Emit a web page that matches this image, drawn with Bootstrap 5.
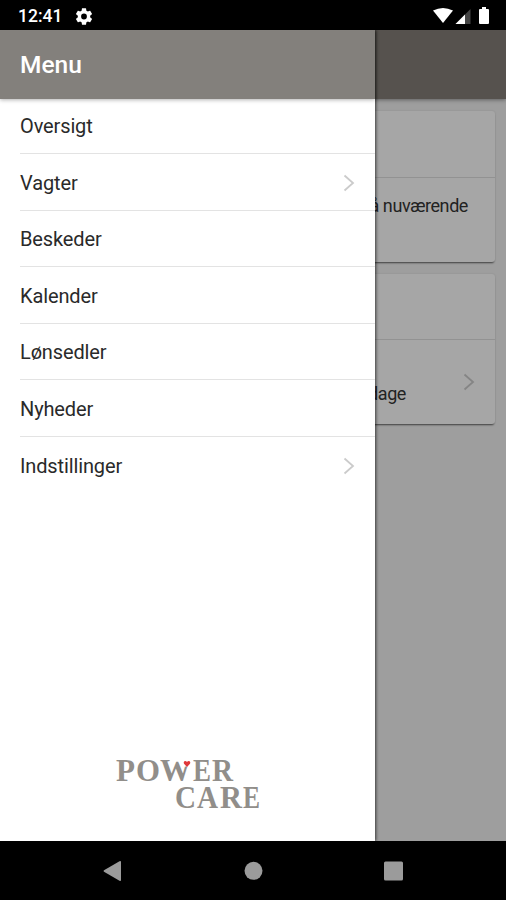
<!DOCTYPE html>
<html lang="da">
<head>
<meta charset="utf-8">
<meta name="viewport" content="width=device-width, initial-scale=1">
<title>Power Care</title>
<link href="https://cdn.jsdelivr.net/npm/bootstrap@5.3.0/dist/css/bootstrap.min.css" rel="stylesheet">
<style>
body{font-family:Roboto,"Liberation Sans",sans-serif;color:#222;width:506px;height:900px;overflow:hidden}
svg{display:block}
.status-bar{height:30px;padding:2px 16px 0 18px;font-size:17.5px;font-weight:500}
.settings-icon{margin-left:14px}
.app-bar{height:69px;background:#56524e;box-shadow:0 1px 4px rgba(0,0,0,.4)}
.page-view{background:#9e9e9e}
.info-card{background:#a6a6a6;border-radius:3px;box-shadow:0 2px 2px -1px rgba(0,0,0,.6),0 0 2px rgba(0,0,0,.12);margin:12px 11px 0;font-size:18px;letter-spacing:-.42px;line-height:27px}
.card-one{height:151px}
.card-two{height:150px}
.card-title-space{height:67px;border-bottom:1px solid #929292}
.card-two .card-title-space{height:66px}
.card-copy{padding:14px 27px}
.card-link{padding:0 20px 0 0}
.card-link p{padding-right:57px;padding-top:23px}
.drawer{width:375px;z-index:2;box-shadow:1px 0 3px rgba(0,0,0,.65)}
.drawer-head{height:69px;z-index:1;background:#83807c;padding:1px 0 0 20px;font-size:24.5px;font-weight:500;box-shadow:0 1px 4px rgba(0,0,0,.3)}
.menu-list{margin-top:-1.5px;padding-left:20px;font-size:20px;letter-spacing:-.13px}
.menu-item{height:56.6px;border-bottom:1px solid #e3e3e3;padding:1.5px 20px 0 0;color:#2a2a2a;text-decoration:none}
.menu-item:last-child{border-bottom:0}
.brand{margin-bottom:20px;margin-left:113px}
.nav-keys{height:59px}
</style>
<script src="https://cdn.jsdelivr.net/npm/bootstrap@5.3.0/dist/js/bootstrap.bundle.min.js"></script>
</head>
<body class="d-flex flex-column m-0">
<div class="status-bar bg-black text-white d-flex align-items-center flex-shrink-0">
  <span>12:41</span>
  <svg class="settings-icon" width="16" height="17" viewBox="2.3 2 19.4 20" fill="#fff"><path d="M19.43 12.98c.04-.32.07-.64.07-.98s-.03-.66-.07-.98l2.11-1.65c.19-.15.24-.42.12-.64l-2-3.46c-.12-.22-.39-.3-.61-.22l-2.49 1c-.52-.4-1.08-.73-1.69-.98l-.38-2.65A.49.49 0 0 0 14 2h-4c-.25 0-.46.18-.49.42l-.38 2.65c-.61.25-1.17.59-1.69.98l-2.49-1c-.23-.09-.49 0-.61.22l-2 3.46c-.13.22-.07.49.12.64l2.11 1.65c-.04.32-.07.65-.07.98s.03.66.07.98l-2.11 1.65c-.19.15-.24.42-.12.64l2 3.46c.12.22.39.3.61.22l2.49-1c.52.4 1.08.73 1.69.98l.38 2.65c.03.24.24.42.49.42h4c.25 0 .46-.18.49-.42l.38-2.65c.61-.25 1.17-.59 1.69-.98l2.49 1c.23.09.49 0 .61-.22l2-3.46c.12-.22.07-.49-.12-.64zM12 15.5a3.5 3.5 0 1 1 0-7 3.5 3.5 0 0 1 0 7z"/></svg>
  <svg class="ms-auto" width="57" height="18" viewBox="433 6 57 18"><path d="M433 9.5q10-5 20 0L443 22z" fill="#fff"/><path d="M455.500 23L470.500 8V23z" fill="#444"/><path d="M455.500 23L465 13.500V23z" fill="#fff"/><path d="M479 9q0-1 1-1h2V6h4v2h2q1 0 1 1v13q0 1-1 1h-8q-1 0-1-1z" fill="#fff"/></svg>
</div>
<main class="page-view position-relative flex-grow-1">
  <header class="app-bar"></header>
  <section class="info-card card-one">
    <div class="card-title-space"></div>
    <p class="card-copy text-end mb-0">på nuværende</p>
  </section>
  <section class="info-card card-two d-flex flex-column">
    <div class="card-title-space flex-shrink-0"></div>
    <div class="card-link d-flex align-items-center justify-content-end flex-grow-1">
      <p class="mb-0">dage</p>
      <svg width="12" height="18" viewBox="0 0 12 18" fill="none" stroke="#858585" stroke-width="1.8"><path d="M1.500 1.500L10 9l-8.500 7.500"/></svg>
    </div>
  </section>
  <aside class="drawer bg-white position-absolute top-0 start-0 h-100 d-flex flex-column">
    <div class="drawer-head position-relative text-white d-flex align-items-center flex-shrink-0">Menu</div>
    <nav class="menu-list d-flex flex-column">
      <a class="menu-item d-flex align-items-center">Oversigt</a>
      <a class="menu-item d-flex align-items-center justify-content-between">Vagter<svg width="12" height="18" viewBox="0 0 12 18" fill="none" stroke="#cbcbcb" stroke-width="1.8"><path d="M1.500 1.500L10 9l-8.500 7.500"/></svg></a>
      <a class="menu-item d-flex align-items-center">Beskeder</a>
      <a class="menu-item d-flex align-items-center">Kalender</a>
      <a class="menu-item d-flex align-items-center">Lønsedler</a>
      <a class="menu-item d-flex align-items-center">Nyheder</a>
      <a class="menu-item d-flex align-items-center justify-content-between">Indstillinger<svg width="12" height="18" viewBox="0 0 12 18" fill="none" stroke="#cbcbcb" stroke-width="1.8"><path d="M1.500 1.500L10 9l-8.500 7.500"/></svg></a>
    </nav>
    <svg class="brand mt-auto" width="150" height="76" viewBox="113 745 150 76" fill="#918e8a" font-family="'Liberation Serif',serif" font-weight="700" font-size="32" role="img" aria-label="Power Care">
      <text x="116" y="781" textLength="19" lengthAdjust="spacingAndGlyphs">P</text>
      <text x="136" y="781" textLength="24" lengthAdjust="spacingAndGlyphs">O</text>
      <text x="160" y="781" textLength="31" lengthAdjust="spacingAndGlyphs">W</text>
      <text x="193" y="781" textLength="18" lengthAdjust="spacingAndGlyphs">E</text>
      <text x="212" y="781" textLength="21" lengthAdjust="spacingAndGlyphs">R</text>
      <text x="175" y="808" textLength="21" lengthAdjust="spacingAndGlyphs">C</text>
      <text x="197" y="808" textLength="21" lengthAdjust="spacingAndGlyphs">A</text>
      <text x="220" y="808" textLength="22" lengthAdjust="spacingAndGlyphs">R</text>
      <text x="243" y="808" textLength="17" lengthAdjust="spacingAndGlyphs">E</text>
      <path d="M182.500 758h10v8.500h-9z" fill="#fff"/>
      <path d="M187 767l-3-3.200q-.9-2.300 1.100-2.800 1.300 0 1.900 1.100.6-1.100 1.900-1.100 2 .5 1.100 2.800z" fill="#e0393b"/>
    </svg>
  </aside>
</main>
<footer class="nav-keys bg-black flex-shrink-0">
  <svg width="506" height="59" viewBox="0 841 506 59" fill="#9b9b9b"><path d="M104 870.200l15.500-9q1.500-.7 1.500.8v18q0 1.500-1.500.8l-15.500-9q-1-.8 0-1.600z"/><circle cx="253.500" cy="870.800" r="9"/><rect x="384" y="861.500" width="19" height="19" rx="1.500"/></svg>
</footer>
</body>
</html>
